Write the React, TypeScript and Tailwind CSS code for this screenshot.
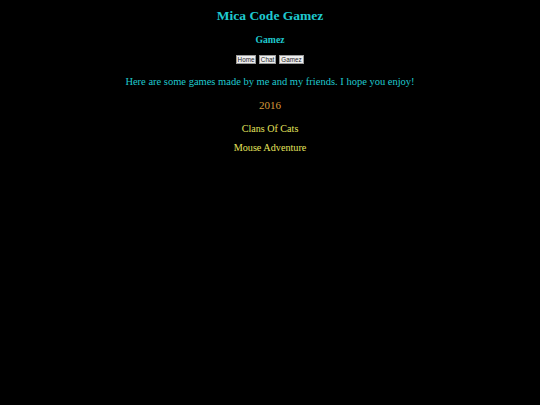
import React from "react";

export default function App() {
  return (
    <div className="min-h-[405px] w-full bg-black text-center" style={{ fontFamily: '"Liberation Serif", serif' }}>
      <div className="pt-[7px] text-[13.5px] font-bold leading-[18px] text-[#1fc9cf]">Mica Code Gamez</div>
      <div className="mt-[8px] text-[9.7px] font-bold leading-[14px] text-[#1fc9cf]">Gamez</div>
      <div className="mt-[8px] flex justify-center gap-[3px]" style={{ fontFamily: '"Liberation Sans", sans-serif' }}>
        <button className="h-[9px] w-[20px] border border-[#9a9a9a] bg-[#eeeeee] p-0 text-[6.3px] leading-[7px] text-[#222]">Home</button>
        <button className="h-[9px] w-[17px] border border-[#9a9a9a] bg-[#eeeeee] p-0 text-[6.3px] leading-[7px] text-[#222]">Chat</button>
        <button className="h-[9px] w-[25px] border border-[#9a9a9a] bg-[#eeeeee] p-0 text-[6.3px] leading-[7px] text-[#222]">Gamez</button>
      </div>
      <div className="mt-[11px] text-[10.5px] leading-[14px] text-[#1fc9cf]">Here are some games made by me and my friends. I hope you enjoy!</div>
      <div className="mt-[9px] text-[11px] leading-[14px] text-[#d99a3a]">2016</div>
      <div className="mt-[10px] text-[10.1px] leading-[14px] text-[#e4e35c]">Clans Of Cats</div>
      <div className="mt-[5px] text-[10.2px] leading-[14px] text-[#e4e35c]">Mouse Adventure</div>
    </div>
  );
}
